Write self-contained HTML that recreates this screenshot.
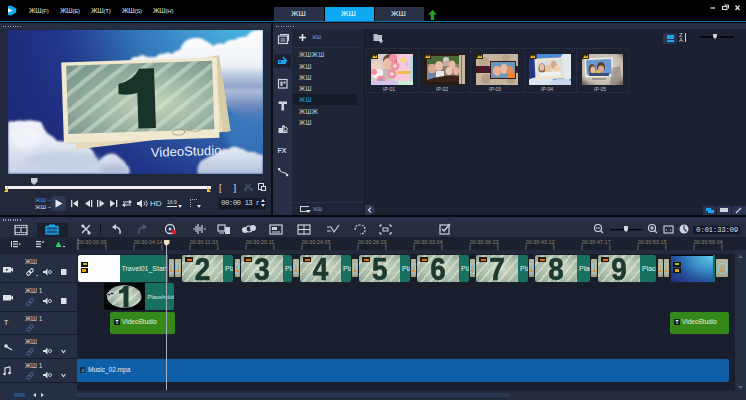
<!DOCTYPE html>
<html><head><meta charset="utf-8">
<style>
*{margin:0;padding:0;box-sizing:border-box}
html,body{width:746px;height:400px;overflow:hidden;background:#000;font-family:"Liberation Sans",sans-serif;}
.a{position:absolute}
.t{position:absolute;white-space:nowrap;line-height:1}
.dots{position:absolute;height:1.5px;background:repeating-linear-gradient(90deg,#9aa2b4 0 1px,transparent 1px 2.4px)}
.clipimg{background:repeating-linear-gradient(-50deg,rgba(230,238,222,0.5) 0 2px,transparent 2px 7px),radial-gradient(ellipse at 55% 50%,#d2dcc6 0%,#a9bca8 60%,#8aa294 100%);border-radius:2px 0 0 2px;overflow:hidden}
.num{font-family:"Liberation Sans",sans-serif;font-weight:bold;font-size:31px;color:#1c3a30;line-height:1;-webkit-text-stroke:0.7px #1c3a30;transform:scaleX(0.9)}
.fx{width:8px;height:5px;background:#2a1808;border:1.2px solid #2a1808;background-image:linear-gradient(#d8701a,#d8701a);background-size:5px 2px;background-position:1px 1px;background-repeat:no-repeat}
.tile{top:259px;height:17.7px;background:linear-gradient(#b8b898,#a4a484);border-radius:1px;overflow:hidden}
.tile::before{content:"";position:absolute;left:12%;right:12%;top:22%;bottom:18%;border:1px solid #8fd0e8;border-radius:40%}
.tile::after{content:"";position:absolute;left:50%;margin-left:-2px;width:4px;top:30%;height:45%;background:linear-gradient(transparent 0 40%,#e0902a 40% 55%,transparent 55% 80%,#e0902a 80%);clip-path:polygon(50% 0,100% 100%,0 100%);opacity:0.9}
</style></head><body>
<!-- MENU BAR -->
<div class="a" style="left:0;top:0;width:746px;height:21px;background:#000"></div>
<svg class="a" style="left:7px;top:5px" width="11" height="11" viewBox="0 0 11 11"><path d="M1 1 L4 0.5 L9.2 3.5 L9.2 7.5 L4 10.5 L1 10 Z" fill="#12aef0"/><path d="M1 3.3 L5.5 5.5 L1 7.7 Z" fill="#fff"/><path d="M3 1.5 L8 4" stroke="#0a88d0" stroke-width="0.8"/></svg>
<div class="t" style="left:29px;top:6.5px;font-size:7px;color:#dfe3ea;letter-spacing:-0.2px">ЖШ<span style="font-size:6px">(F)</span></div>
<div class="t" style="left:60px;top:6.5px;font-size:7px;color:#dfe3ea;letter-spacing:-0.2px">ЖШ<span style="font-size:6px">(E)</span></div>
<div class="t" style="left:91px;top:6.5px;font-size:7px;color:#dfe3ea;letter-spacing:-0.2px">ЖШ<span style="font-size:6px">(T)</span></div>
<div class="t" style="left:122px;top:6.5px;font-size:7px;color:#dfe3ea;letter-spacing:-0.2px">ЖШ<span style="font-size:6px">(S)</span></div>
<div class="t" style="left:153px;top:6.5px;font-size:7px;color:#dfe3ea;letter-spacing:-0.2px">ЖШ<span style="font-size:6px">(H)</span></div>
<!-- tabs -->
<div class="a" style="left:274px;top:7px;width:50px;height:14px;background:#293146"></div>
<div class="a" style="left:325px;top:7px;width:49px;height:14px;background:#0ea8f2"></div>
<div class="a" style="left:375px;top:7px;width:49px;height:14px;background:#293146"></div>
<div class="t" style="left:291px;top:10px;font-size:8px;color:#e8ebf0">ЖШ</div>
<div class="t" style="left:341px;top:10px;font-size:8px;color:#fff">ЖШ</div>
<div class="t" style="left:391px;top:10px;font-size:8px;color:#e8ebf0">ЖШ</div>
<svg class="a" style="left:427.5px;top:9.5px" width="9" height="10" viewBox="0 0 9 10"><path d="M4.5 0 L9 4.5 L6.2 4.5 L6.2 10 L2.8 10 L2.8 4.5 L0 4.5 Z" fill="#28a028"/></svg>
<!-- window controls -->
<svg class="a" style="left:708px;top:3px" width="36" height="10" viewBox="0 0 36 10" stroke="#d8dce4" fill="none">
<path d="M2.5 5 H7" stroke-width="1.3"/>
<rect x="14.5" y="3.5" width="4.5" height="3" stroke-width="1.1"/><path d="M16.5 2 H20.5 V5.5" stroke-width="1"/>
<path d="M27.5 2.5 L31.5 7 M31.5 2.5 L27.5 7" stroke-width="1.3"/>
</svg>
<!-- accent line -->
<div class="a" style="left:0;top:21px;width:746px;height:1.3px;background:#0f72a8"></div>
<div class="a" style="left:0;top:22px;width:746px;height:1px;background:#05080d"></div>

<!-- PREVIEW PANEL -->
<div class="a" style="left:0;top:23px;width:271px;height:192px;background:#212839"></div>
<div class="a" style="left:0;top:23px;width:271px;height:6px;background:#272e41"></div>
<div class="dots" style="left:2.5px;top:25.5px;width:19px"></div>
<svg id="preview" class="a" style="left:8px;top:30px" width="255" height="144" viewBox="0 0 255 144">
<defs>
<radialGradient id="sky" cx="238" cy="-30" r="290" gradientUnits="userSpaceOnUse">
<stop offset="0" stop-color="#5ecaee"/><stop offset="0.15" stop-color="#44a6d8"/><stop offset="0.3" stop-color="#3a88c6"/><stop offset="0.42" stop-color="#3070b2"/><stop offset="0.55" stop-color="#284c9a"/><stop offset="0.66" stop-color="#21368a"/><stop offset="0.8" stop-color="#1f2d7e"/><stop offset="1" stop-color="#1d2876"/>
</radialGradient>
<radialGradient id="sage" cx="0.6" cy="0.6" r="0.75">
<stop offset="0" stop-color="#c4d4ba"/><stop offset="0.55" stop-color="#98b2a2"/><stop offset="1" stop-color="#78968a"/>
</radialGradient>
<pattern id="str" width="13.5" height="13.5" patternUnits="userSpaceOnUse" patternTransform="rotate(53)">
<rect x="0" y="0" width="4.3" height="13.5" fill="#dce6d6" fill-opacity="0.5"/>
</pattern>
<linearGradient id="cl1" x1="0" y1="0" x2="0" y2="95" gradientUnits="userSpaceOnUse"><stop offset="0" stop-color="#ffffff"/><stop offset="0.38" stop-color="#eef2f8"/><stop offset="0.47" stop-color="#bdcae0"/><stop offset="0.6" stop-color="#91a4c9"/><stop offset="0.64" stop-color="#aebcda"/><stop offset="0.76" stop-color="#8096c3"/><stop offset="0.9" stop-color="#5a7cb8" stop-opacity="0.6"/><stop offset="1" stop-color="#4a70b0" stop-opacity="0"/></linearGradient>
<linearGradient id="cl2" x1="0" y1="90" x2="0" y2="144" gradientUnits="userSpaceOnUse"><stop offset="0" stop-color="#f2f5fa"/><stop offset="0.45" stop-color="#e2e8f2"/><stop offset="1" stop-color="#c6cfe4"/></linearGradient>
<linearGradient id="cl3" x1="0" y1="117" x2="0" y2="144" gradientUnits="userSpaceOnUse"><stop offset="0" stop-color="#e6ecf5"/><stop offset="0.5" stop-color="#cdd7e8"/><stop offset="1" stop-color="#b4c2dc"/></linearGradient>
<filter id="bl" x="-10%" y="-10%" width="120%" height="120%"><feGaussianBlur stdDeviation="0.8"/></filter>
<filter id="bl2" x="-30%" y="-30%" width="160%" height="160%"><feGaussianBlur stdDeviation="2.5"/></filter>
</defs>
<rect width="255" height="144" fill="url(#sky)"/>
<ellipse cx="245" cy="100" rx="28" ry="30" fill="#3a7cc0" opacity="0.7" filter="url(#bl2)"/>
<!-- top right cloud -->
<path filter="url(#bl)" fill="url(#cl1)" d="M122,31 Q124,26 130,27 Q134,23 139,27 L148,27 Q151,23 156,24 Q160,21 164,24 Q168,20 172,20 Q175,10 183,8.5 Q192,6 198,11 Q203,13 205,16 Q210,12 216,14 Q220,9 226,10 Q232,6 238,7 Q242,1 249,0 L255,0 L255,97 Q240,94 226,84 Q210,68 195,50 L122,33 Z"/>
<!-- bottom left cloud -->
<path filter="url(#bl)" fill="url(#cl2)" d="M0,92.5 Q2,90.5 6,91.5 Q11,90 16,91 Q22,89.5 27,91 Q31,91 33.5,92.5 Q35,97 37,100 Q39,103 40.5,104 Q45,106 49,111 L66,112 Q70,110 74,112 Q79,113 81,117.5 Q85,119 87.5,127 Q90,130 91,131 Q96,124 103,123.5 Q108,123 111,127 Q116,130 119,135.5 Q122,137 121.5,144 L0,144 Z"/>
<ellipse cx="55" cy="130" rx="38" ry="9" fill="#b9c4dc" opacity="0.5" filter="url(#bl2)"/>
<ellipse cx="18" cy="108" rx="16" ry="10" fill="#f6f8fc" opacity="0.7" filter="url(#bl2)"/>
<ellipse cx="106" cy="140" rx="14" ry="5" fill="#9aa8cc" opacity="0.5" filter="url(#bl2)"/>
<!-- bottom right cloud -->
<path filter="url(#bl)" fill="url(#cl3)" d="M190,144 Q188,137 193,131 Q203,125 210,123 Q214,118 220,119 Q226,115 231,118 Q236,119 240,122 Q246,121 250,124 L255,125 L255,144 Z"/>
<!-- back card -->
<polygon points="62,45 211,25.5 222.5,101 68,119.5" fill="#e5d9ba"/>
<polygon points="205,26.3 211,25.5 222.5,101 215,102" fill="#d9cba6"/>
<!-- front card -->
<g transform="translate(53.25 32.5) rotate(-1.9)">
<rect x="0" y="0" width="155.6" height="80.5" fill="#f1e8d0"/>
<rect x="4.8" y="3.3" width="146" height="68.5" fill="url(#sage)"/>
<rect x="4.8" y="3.3" width="146" height="68.5" fill="url(#str)"/>
<path d="M92.5 8.8 L92.5 68.5 L75 68.5 L75 33 Q66 35.5 56.2 33.4 L56.4 23.4 Q72 20 77.5 8.8 Z" fill="#193328"/>
<ellipse cx="115" cy="73.5" rx="6" ry="3" fill="none" stroke="#9a8e78" stroke-width="1" stroke-dasharray="1.2 0.6"/><path d="M121 73 Q125 71 129 73 Q133 74 138 72" fill="none" stroke="#a89c84" stroke-width="0.8"/>
</g>
<text x="143" y="127" transform="rotate(-2 143 127)" font-family="Liberation Sans" font-size="13" fill="#eef2f8" letter-spacing="0.35" textLength="71" lengthAdjust="spacing">VideoStudio</text>
</svg>


<!-- preview controls -->
<div class="a" style="left:30.5px;top:178px;width:7px;height:7px;background:#c9ccd4;clip-path:polygon(0 0,100% 0,100% 55%,50% 100%,0 55%)"></div>
<div class="a" style="left:5px;top:186px;width:206px;height:2.5px;background:#f2f2f2"></div>
<div class="a" style="left:4px;top:186px;width:4px;height:6px;background:#f0b84a;clip-path:polygon(100% 0,100% 100%,0 100%)"></div>
<div class="a" style="left:207px;top:186px;width:4px;height:6px;background:#f0b84a;clip-path:polygon(0 0,100% 100%,0 100%)"></div>
<div class="t" style="left:35px;top:197px;font-size:6px;color:#1ea7f0">ЖШ –</div>
<div class="t" style="left:35px;top:204px;font-size:6px;color:#d8dce4">ЖШ –</div>
<div class="a" style="left:51px;top:196px;width:15px;height:15px;background:#2e3850;border-radius:2px"></div>
<svg class="a" style="left:55px;top:199px" width="8" height="9" viewBox="0 0 8 9"><path d="M0.5 0.5 L7.5 4.5 L0.5 8.5Z" fill="#e8ebf0"/></svg>
<svg class="a" style="left:70px;top:196px" width="130" height="15" viewBox="0 0 130 15" fill="#d9dde5" stroke="#d9dde5">
<rect x="1" y="4" width="1.3" height="7" stroke="none"/><path d="M8 4 L3 7.5 L8 11Z" stroke="none"/>
<path d="M20 4 L15 7.5 L20 11Z" stroke="none"/><rect x="21" y="4" width="1.3" height="7" stroke="none"/>
<rect x="27" y="4" width="1.3" height="7" stroke="none"/><path d="M29.5 4 L34.5 7.5 L29.5 11Z" stroke="none"/>
<path d="M40 4 L45 7.5 L40 11Z" stroke="none"/><rect x="46" y="4" width="1.3" height="7" stroke="none"/>
<path d="M53 6 L61 6 M59 4.5 L61 6 L59 7.5 M61 9 L53 9 M55 7.5 L53 9 L55 10.5" fill="none" stroke-width="1.2"/>
<path d="M67 6 L69 6 L72 3.5 L72 11.5 L69 9 L67 9Z" stroke="none"/><path d="M74 5.5 Q75.5 7.5 74 9.5 M76 4.5 Q78.5 7.5 76 10.5" fill="none" stroke-width="0.9"/>
</svg>
<div class="t" style="left:150px;top:199.5px;font-size:8px;color:#d9dde5">HD</div>
<div class="a" style="left:167px;top:199px;width:10px;height:8px;border-bottom:1px solid #d9dde5"></div>
<div class="t" style="left:167px;top:200px;font-size:5px;color:#d9dde5">16:9</div>
<div class="a" style="left:178px;top:205px;width:4px;height:3px;background:#d9dde5;clip-path:polygon(0 0,100% 0,50% 100%)"></div>
<div class="a" style="left:190px;top:199px;width:7px;height:8px;border-left:1px dotted #aab;border-top:1px dotted #aab"></div>
<div class="a" style="left:197px;top:205px;width:4px;height:3px;background:#d9dde5;clip-path:polygon(0 0,100% 0,50% 100%)"></div>
<div class="t" style="left:219px;top:183px;font-size:9.5px;color:#d9dde5">[</div>
<div class="t" style="left:233.5px;top:183px;font-size:9.5px;color:#d9dde5">]</div>
<svg class="a" style="left:244px;top:183px" width="9" height="8" viewBox="0 0 9 8"><path d="M1 1 L7 6 M7 1 L1 6" stroke="#5d6a88" stroke-width="1"/><circle cx="1.5" cy="6.5" r="1.2" fill="none" stroke="#5d6a88" stroke-width="0.8"/><circle cx="7.5" cy="6.5" r="1.2" fill="none" stroke="#5d6a88" stroke-width="0.8"/></svg>
<div class="a" style="left:258px;top:183px;width:6px;height:7px;border:1.2px solid #d9dde5"></div>
<div class="a" style="left:261px;top:186px;width:5px;height:5px;border:1.2px solid #d9dde5;background:#212839"></div>
<div class="a" style="left:219px;top:198px;width:47px;height:11px;background:#141925"></div>
<div class="a" style="left:220px;top:199px;width:39px;height:9px;overflow:hidden"><div class="t" style="left:1px;top:1px;font-size:7.5px;color:#d0d4dc;font-family:'Liberation Mono',monospace;letter-spacing:-0.6px">00:00 13 n</div></div>
<div class="a" style="left:261px;top:199px;width:4px;height:3px;background:#d9dde5;clip-path:polygon(50% 0,100% 100%,0 100%)"></div>
<div class="a" style="left:261px;top:204px;width:4px;height:3px;background:#d9dde5;clip-path:polygon(0 0,100% 0,50% 100%)"></div>
<!-- LIBRARY PANEL -->
<div class="a" style="left:271px;top:23px;width:2px;height:192px;background:#0b0e15"></div>
<div class="a" style="left:273px;top:23px;width:473px;height:192px;background:#1b2130"></div>
<div class="a" style="left:273px;top:23px;width:473px;height:6px;background:#272e41"></div>
<div class="dots" style="left:275.5px;top:25.5px;width:19px"></div>
<div class="a" style="left:273px;top:29px;width:19px;height:186px;background:#262f45"></div>
<div class="a" style="left:292px;top:29px;width:72px;height:186px;background:#1e2536"></div>
<div class="a" style="left:364px;top:29px;width:1px;height:186px;background:#151a26"></div>


<!-- library sidebar icons -->
<svg class="a" style="left:273px;top:29px" width="19" height="186" viewBox="0 0 19 186" fill="#cfd4de">
<path d="M7 5.5 H15.5 V12" fill="none" stroke="#cfd4de" stroke-width="1.1"/><rect x="5.5" y="7" width="9" height="7.5" fill="none" stroke="#cfd4de" stroke-width="1.2"/><rect x="7.5" y="9.5" width="5" height="0.9"/><rect x="7.5" y="11.5" width="5" height="0.9"/>
<rect x="1" y="25" width="17" height="13.5" fill="#1a2030"/>
<path d="M5 31 H13 V35 H5Z" fill="#1aa6ee"/><path d="M10 28 L14 32.5" stroke="#1aa6ee" stroke-width="1.6"/><rect x="6" y="32" width="2" height="1.2" fill="#1a2030"/>
<rect x="5.5" y="50.5" width="8.5" height="8.5" fill="none" stroke="#cfd4de" stroke-width="1.2"/><rect x="7.5" y="52.5" width="2" height="4.5"/><rect x="10.5" y="52.5" width="2" height="2"/>
<path d="M5.5 72.5 H14 V75 H11 V81.5 H8.5 V75 H5.5Z"/>
<path d="M5.5 99 H9 V96.5 H12 V99 H14.5 V104 H5.5Z"/><circle cx="12.5" cy="100" r="2.6" fill="#262f45"/><circle cx="12.5" cy="100" r="1.8" fill="none" stroke="#cfd4de" stroke-width="1"/>
<text x="4.5" y="124" font-family="Liberation Sans" font-weight="bold" font-size="7">FX</text>
<path d="M6.5 141 Q8 143.5 10.5 143.5 Q13 143.5 14 146" fill="none" stroke="#cfd4de" stroke-width="1.2"/><rect x="5" y="139" width="2.2" height="2.2"/><rect x="13" y="145" width="2.2" height="2.2"/>
</svg>
<!-- categories -->
<svg class="a" style="left:298px;top:33px" width="9" height="9" viewBox="0 0 9 9"><path d="M4.5 1 V8 M1 4.5 H8" stroke="#e8ebf0" stroke-width="1.6"/></svg>
<div class="t" style="left:312px;top:35px;font-size:5px;color:#7b9ad8">ЖШ</div>
<div class="a" style="left:293px;top:94px;width:64px;height:11px;background:#141a26"></div>
<div class="t" style="left:299px;top:52px;font-size:6.5px;color:#cdd2da;letter-spacing:0.4px">ЖШЖШ</div>
<div class="t" style="left:299px;top:63.5px;font-size:6.5px;color:#cdd2da;letter-spacing:0.4px">ЖШ</div>
<div class="t" style="left:299px;top:74.5px;font-size:6.5px;color:#cdd2da;letter-spacing:0.4px">ЖШ</div>
<div class="t" style="left:299px;top:85.5px;font-size:6.5px;color:#cdd2da;letter-spacing:0.4px">ЖШ</div>
<div class="t" style="left:299px;top:97px;font-size:6.5px;color:#1ea4ec;letter-spacing:0.4px">ЖШ</div>
<div class="t" style="left:299px;top:108.5px;font-size:6.5px;color:#cdd2da;letter-spacing:0.4px">ЖШЖ</div>
<div class="t" style="left:299px;top:119.5px;font-size:6.5px;color:#cdd2da;letter-spacing:0.4px">ЖШ</div>
<div class="a" style="left:292px;top:202px;width:72px;height:1px;background:#283045"></div>
<div class="a" style="left:292px;top:47px;width:72px;height:1px;background:#262e42"></div>
<div class="a" style="left:300px;top:206px;width:9px;height:1.2px;background:#cfd4de"></div>
<div class="a" style="left:300px;top:206px;width:1.2px;height:6px;background:#cfd4de"></div>
<div class="a" style="left:300px;top:211px;width:9px;height:1.2px;background:#cfd4de"></div>
<div class="a" style="left:306px;top:210px;width:5px;height:3px;background:#cfd4de;clip-path:polygon(0 0,100% 0,50% 100%)"></div>
<div class="t" style="left:313px;top:207px;font-size:5px;color:#7b9ad8">ЖШ</div>
<div class="a" style="left:365px;top:205px;width:10px;height:10px;background:#2e3954;border-radius:0 5px 5px 0"></div>
<svg class="a" style="left:367px;top:207px" width="6" height="6" viewBox="0 0 6 6"><path d="M4 0.5 L1.5 3 L4 5.5" fill="none" stroke="#d8dde6" stroke-width="1.1"/></svg>
<!-- content toolbar -->
<svg class="a" style="left:373px;top:33px" width="11" height="10" viewBox="0 0 11 10"><path d="M0.5 1 L4 1 L5 2 L9 2 L9 8 L0.5 8Z" fill="#b8bec9"/><path d="M8 6 V10 M6 8 H10" stroke="#d8dde6" stroke-width="1.2"/></svg>
<div class="a" style="left:663px;top:33px;width:14px;height:11px;background:#2a3350;border-radius:2px"></div>
<div class="a" style="left:667px;top:35px;width:7px;height:3.5px;background:#1aa6ee"></div>
<div class="a" style="left:667px;top:39.5px;width:7px;height:2.5px;background:#1aa6ee"></div>
<div class="t" style="left:679px;top:33px;font-size:6px;color:#cfd4de;line-height:5px">Z<br>A</div>
<div class="a" style="left:685px;top:33px;width:1px;height:9px;background:#cfd4de"></div>
<div class="a" style="left:700px;top:36px;width:34px;height:2px;background:#05070c;border-radius:1px"></div>
<div class="a" style="left:713px;top:34px;width:4px;height:5px;background:#c8ccd6;clip-path:polygon(0 0,100% 0,100% 60%,50% 100%,0 60%)"></div>
<!-- grid -->
<div class="a" style="left:365px;top:48px;width:264px;height:45px;border:1px solid #232c40;border-right-width:1px"></div>
<div class="a" style="left:418px;top:48px;width:1px;height:45px;background:#232c40"></div>
<div class="a" style="left:470px;top:48px;width:1px;height:45px;background:#232c40"></div>
<div class="a" style="left:524px;top:48px;width:1px;height:45px;background:#232c40"></div>
<div class="a" style="left:576px;top:48px;width:1px;height:45px;background:#232c40"></div>
<div class="t" style="left:383px;top:87px;font-size:5px;color:#c4cad6">IP-01</div>
<div class="t" style="left:436px;top:87px;font-size:5px;color:#c4cad6">IP-02</div>
<div class="t" style="left:489px;top:87px;font-size:5px;color:#c4cad6">IP-03</div>
<div class="t" style="left:541px;top:87px;font-size:5px;color:#c4cad6">IP-04</div>
<div class="t" style="left:594px;top:87px;font-size:5px;color:#c4cad6">IP-05</div>

<!-- thumbnails -->
<svg class="a" style="left:371px;top:54px" width="42" height="31" viewBox="0 0 42 31">
<rect width="42" height="31" fill="#f8c8dc"/>
<rect x="0" y="0" width="24" height="27" fill="#d8ccc8"/>
<ellipse cx="19" cy="6" rx="7" ry="6" fill="#6a4a38"/><ellipse cx="17" cy="10" rx="5" ry="6" fill="#e8c0a8"/>
<ellipse cx="6" cy="12" rx="5" ry="5" fill="#f0d0c0"/><ellipse cx="7" cy="20" rx="6" ry="5" fill="#f4f4f6"/><rect x="12" y="15" width="8" height="10" fill="#c8b8b8"/>
<circle cx="22" cy="4" r="4" fill="#f4909e"/><circle cx="24" cy="12" r="4.5" fill="#f4909e"/><circle cx="21" cy="20" r="4.5" fill="#f4909e"/><circle cx="10" cy="26" r="4.5" fill="#f4909e"/><circle cx="3" cy="18" r="3" fill="#f4909e"/>
<circle cx="24" cy="12" r="1.8" fill="#e6e8ec"/><circle cx="21" cy="20" r="1.8" fill="#e6e8ec"/><circle cx="10" cy="26" r="1.8" fill="#8aa6c8"/>
<circle cx="32" cy="6" r="2.5" fill="#f4e060"/><circle cx="36" cy="10" r="1.8" fill="#c0c0e8"/>
<rect x="27" y="17" width="13" height="3" fill="#f0b838" opacity="0.9"/>
<rect x="0" y="27" width="27" height="4" fill="#d4c4ec"/><rect x="27" y="27" width="15" height="4" fill="#c8f0d4"/>
<rect x="39.5" y="2" width="2.5" height="25" fill="#a8dce4"/>
<rect x="0" y="0" width="7" height="5" fill="#2a2416"/><path d="M1 4 L3 1 L4 3 L6 1 L6 4Z" fill="#f5c020"/>
</svg>
<svg class="a" style="left:424px;top:54px" width="41" height="31" viewBox="0 0 41 31">
<rect width="41" height="31" fill="#2a1a12"/>
<rect x="3" y="2" width="33" height="24" fill="#4a6a3a"/>
<rect x="3" y="10" width="33" height="16" fill="#8a7a70"/>
<ellipse cx="8" cy="15" rx="4" ry="5" fill="#d8a890"/><rect x="4" y="19" width="8" height="7" fill="#6a88b0"/>
<ellipse cx="15" cy="12" rx="4" ry="5" fill="#e8c0a8"/><rect x="12" y="17" width="8" height="8" fill="#e6e8ec"/>
<ellipse cx="22" cy="8" rx="3.5" ry="4.5" fill="#c8a8a0"/><ellipse cx="22" cy="5" rx="3" ry="2" fill="#c8c8c8"/>
<ellipse cx="28" cy="11" rx="3.5" ry="4.5" fill="#e8b8a0"/><ellipse cx="25" cy="17" rx="3.5" ry="4" fill="#f0c8b8"/><ellipse cx="32" cy="17" rx="3" ry="4" fill="#e8b0a0"/>
<path d="M3 26 Q20 20 36 22 L36 28 L3 28Z" fill="#3a2418"/>
<rect x="35" y="1" width="6" height="29" fill="#c8b8a0"/><rect x="37" y="1" width="1" height="29" fill="#8a7060"/>
<rect x="0" y="0" width="7" height="5" fill="#2a2416"/><path d="M1 4 L3 1 L4 3 L6 1 L6 4Z" fill="#f5c020"/>
</svg>
<svg class="a" style="left:476px;top:54px" width="42" height="31" viewBox="0 0 42 31">
<rect width="42" height="31" fill="#c6b59e"/>
<circle cx="8" cy="8" r="5" fill="#b09a80" opacity="0.6"/><circle cx="30" cy="4" r="4" fill="#b09a80" opacity="0.6"/><circle cx="10" cy="25" r="5" fill="#a89078" opacity="0.6"/><circle cx="35" cy="26" r="4" fill="#a89078" opacity="0.6"/>
<rect x="0" y="12" width="42" height="7" fill="#4a1828"/>
<rect x="14" y="7" width="26" height="18" fill="#3a1a18"/>
<rect x="15" y="8" width="24" height="16" fill="#6a98b8"/>
<ellipse cx="21" cy="17" rx="4" ry="5" fill="#f0b090"/><ellipse cx="28" cy="15" rx="4" ry="5" fill="#e8c0a0"/><ellipse cx="34" cy="17" rx="3.5" ry="5" fill="#e09060"/><rect x="31" y="19" width="8" height="5" fill="#f08030"/>
<rect x="0" y="0" width="7" height="5" fill="#2a2416"/><path d="M1 4 L3 1 L4 3 L6 1 L6 4Z" fill="#f5c020"/>
</svg>
<svg class="a" style="left:529px;top:54px" width="42" height="31" viewBox="0 0 42 31">
<rect width="42" height="31" fill="#4a8ad0"/>
<rect x="0" y="0" width="8" height="31" fill="#23368a"/>
<ellipse cx="38" cy="12" rx="8" ry="14" fill="#dfe8f4"/><ellipse cx="12" cy="28" rx="14" ry="5" fill="#dce6f2"/><ellipse cx="32" cy="29" rx="12" ry="4" fill="#c8d6ec"/>
<g transform="rotate(-3 20 15)"><rect x="6" y="4" width="30" height="21" fill="#efe6cc"/><rect x="8" y="6" width="26" height="16" fill="#d8dee4"/>
<ellipse cx="13" cy="14" rx="3.5" ry="5" fill="#8a6040"/><ellipse cx="13" cy="13" rx="2.5" ry="3.5" fill="#e8c0a8"/><ellipse cx="19" cy="15" rx="3" ry="4" fill="#e8c8a0"/><ellipse cx="25" cy="11" rx="3" ry="4" fill="#d8a888"/><ellipse cx="28" cy="16" rx="3" ry="4" fill="#f0d0b0"/><rect x="10" y="18" width="22" height="4" fill="#f0f0f0"/></g>
<rect x="0" y="0" width="7" height="5" fill="#2a2416"/><path d="M1 4 L3 1 L4 3 L6 1 L6 4Z" fill="#f5c020"/>
</svg>
<svg class="a" style="left:582px;top:54px" width="41" height="31" viewBox="0 0 41 31">
<defs><radialGradient id="vig" cx="0.5" cy="0.45" r="0.7"><stop offset="0" stop-color="#e2dcd2"/><stop offset="0.75" stop-color="#c4bab0"/><stop offset="1" stop-color="#6a6058"/></radialGradient></defs>
<rect width="41" height="31" fill="url(#vig)"/>
<rect x="3" y="4" width="28" height="19" fill="#f2eee6" transform="rotate(-2 17 15)"/>
<rect x="4.5" y="5.5" width="25" height="15" fill="#6a9ad0" transform="rotate(-2 17 15)"/>
<ellipse cx="10" cy="15" rx="3.5" ry="5" fill="#6a4a30"/><ellipse cx="11" cy="16" rx="2.5" ry="3.5" fill="#e8c0a0"/><ellipse cx="19" cy="13" rx="4" ry="5" fill="#5a4030"/><ellipse cx="19" cy="15" rx="3" ry="3.5" fill="#d8a888"/><circle cx="16" cy="18" r="2" fill="#f0c030"/><rect x="7" y="19" width="20" height="3" fill="#3a5078"/>
<rect x="10" y="24" width="14" height="2" fill="#8a8078" opacity="0.7"/>
<path d="M30 14 L38 12 L40 30 L28 30Z" fill="#7a7068" opacity="0.5"/>
<rect x="0" y="0" width="7" height="5" fill="#2a2416"/><path d="M1 4 L3 1 L4 3 L6 1 L6 4Z" fill="#f5c020"/>
</svg>
<!-- bottom right buttons -->
<div class="a" style="left:703px;top:206px;width:13px;height:9px;background:#2a3350"></div>
<div class="a" style="left:706px;top:208px;width:5px;height:3px;background:#1aa6ee"></div>
<div class="a" style="left:708px;top:210px;width:6px;height:3px;background:#1aa6ee"></div>
<div class="a" style="left:717px;top:206px;width:14px;height:9px;background:#2a3350"></div>
<div class="a" style="left:720px;top:208px;width:8px;height:4px;background:#cfd4de"></div>
<div class="a" style="left:732px;top:206px;width:14px;height:9px;background:#2a3350"></div>
<svg class="a" style="left:735px;top:207px" width="7" height="7" viewBox="0 0 7 7"><path d="M1 6 L6 1" stroke="#cfd4de" stroke-width="1.3"/></svg>
<!-- TIMELINE PANEL -->
<div class="a" style="left:0;top:215px;width:746px;height:2px;background:#07090e"></div>
<div class="a" style="left:0;top:217px;width:746px;height:183px;background:#181e2b"></div>
<div class="a" style="left:0;top:217px;width:746px;height:5px;background:#283045"></div>
<div class="dots" style="left:2.5px;top:219px;width:19px"></div>
<div class="a" style="left:0;top:222px;width:746px;height:15px;background:#252d3f"></div>
<div class="a" style="left:0;top:237px;width:77px;height:17px;background:#1e2535"></div>
<div class="a" style="left:77px;top:237px;width:669px;height:13px;background:#1a202e"></div>
<div class="a" style="left:77px;top:250px;width:669px;height:4px;background:#222a3b"></div>
<!-- track headers -->
<div class="a" style="left:0;top:254px;width:77px;height:146px;background:#252e43"></div>
<!-- bottom strip -->
<div class="a" style="left:77px;top:390px;width:669px;height:10px;background:#222a3c"></div>
<div class="a" style="left:77px;top:393px;width:433px;height:4px;background:#2d3650"></div>

<!-- TIMELINE CONTENT -->
<div class="a" style="left:37px;top:223px;width:31px;height:14px;background:#1a2030"></div>
<svg class="a" style="left:0;top:222px" width="746" height="15" viewBox="0 0 746 15" fill="#cfd4de" stroke="#cfd4de">
<rect x="15" y="3.5" width="12" height="9" fill="none" stroke-width="1.2"/><path d="M15 5.5 H27 M15 10.5 H27" stroke-width="0.9"/><path d="M21 5.5 V10.5" stroke-width="1"/><path d="M16.5 3.5 V5.5 M18.5 3.5 V5.5 M20.5 3.5 V5.5 M22.5 3.5 V5.5 M24.5 3.5 V5.5 M16.5 10.5 V12.5 M18.5 10.5 V12.5 M20.5 10.5 V12.5 M22.5 10.5 V12.5 M24.5 10.5 V12.5" stroke="#252d3f" stroke-width="0.7"/>
<rect x="46" y="4.5" width="12" height="7.5" fill="#1a5a8a" stroke="#1aa6ee" stroke-width="1.3"/><rect x="49" y="2.5" width="6" height="2.5" fill="#1aa6ee" stroke="none"/><path d="M46 8 H58" stroke="#1aa6ee" stroke-width="1"/>
<path d="M82 3 L90 11 M90 3 L82 11" stroke-width="1.4"/><circle cx="83" cy="4" r="1.6" stroke="none"/><circle cx="89" cy="11" r="1.6" stroke="none"/>
<rect x="100" y="2" width="1" height="11" fill="#0f131c" stroke="none"/>
<path d="M112 5 L116 2 L116 8Z" stroke="none"/><path d="M115 5 Q121 5 120 12" fill="none" stroke-width="1.4"/>
<path d="M147 5 L143 2 L143 8Z" fill="#4f5a74" stroke="none"/><path d="M144 5 Q138 5 139 12" fill="none" stroke="#4f5a74" stroke-width="1.4"/>
<circle cx="170" cy="7" r="4.5" fill="none" stroke-width="1.3"/><circle cx="170" cy="7" r="1.5" stroke="none"/><circle cx="174" cy="10" r="2.2" fill="#e8202a" stroke="none"/>
<path d="M193 7 H195 M196 4 V10 M198 2 V12 M200 5 V9 M202 3 V11 M204 7 H206" stroke-width="1.2"/>
<rect x="218" y="3" width="7" height="6" fill="none" stroke-width="1.2"/><rect x="225" y="5" width="5" height="7" stroke="none"/><path d="M219 11 H224" stroke-width="1"/>
<circle cx="245" cy="8" r="3" stroke="none"/><circle cx="249" cy="7" r="3" fill="#252d3f" stroke-width="1.1"/><circle cx="253" cy="6" r="3" stroke="none"/>
<rect x="270" y="3" width="12" height="9" fill="none" stroke-width="1.2"/><rect x="272" y="5" width="5" height="3" stroke="none"/><path d="M272 10 H280" stroke-width="1"/>
<rect x="298" y="3" width="12" height="9" fill="none" stroke-width="1.2"/><path d="M298 7.5 H310 M304 3 V12" stroke-width="1"/>
<path d="M327 5 L331 5 L334 10 L339 3" fill="none" stroke-width="1.2"/><path d="M327 9 H331" stroke-width="1"/>
<path d="M355 8 Q355 3 360 3 Q365 3 365 8 Q365 12 360 12" fill="none" stroke-width="1.2" stroke-dasharray="2 1.2"/>
<path d="M380 3 H382 M380 3 V5 M391 3 H389 M391 3 V5 M380 12 H382 M380 12 V10 M391 12 H389 M391 12 V10" stroke-width="1.2"/><rect x="383" y="6" width="5" height="3" fill="none" stroke-width="1"/>
<rect x="440" y="3" width="9" height="9" fill="none" stroke-width="1.2"/><path d="M442 7 L444 9 L450 2" fill="none" stroke-width="1.4"/>
<circle cx="598" cy="6" r="3.5" fill="none" stroke-width="1.2"/><path d="M596 6 H600 M600.5 8.5 L603 11" stroke-width="1.2"/>
<rect x="610" y="7" width="33" height="1.3" fill="#05070c" stroke="none"/><path d="M624 4 H628 V8 L626 10 L624 8Z" stroke="none"/>
<circle cx="652" cy="6" r="3.5" fill="none" stroke-width="1.2"/><path d="M650 6 H654 M652 4 V8 M654.5 8.5 L657 11" stroke-width="1.2"/>
<rect x="664" y="4" width="9" height="7" fill="none" stroke-width="1.1"/><path d="M666 8 H667 M670 8 H671" stroke-width="1"/>
<circle cx="684" cy="7" r="4.5" stroke="none"/><path d="M684 3.5 V7 L686.5 9.5" stroke="#252d3f" stroke-width="1.1" fill="none"/>
</svg>
<div class="a" style="left:693px;top:226px;width:47px;height:8px;background:#141925"></div>
<div class="t" style="left:696px;top:226.5px;font-size:7.5px;color:#d9dde5;font-family:'Liberation Mono',monospace;letter-spacing:-0.3px">0:01:33:09</div>
<svg class="a" style="left:0;top:237px" width="77" height="17" viewBox="0 0 77 17" fill="#cfd4de">
<rect x="11" y="4" width="1" height="6"/><rect x="13" y="4" width="5" height="1.2"/><rect x="13" y="6.5" width="5" height="1.2"/><rect x="13" y="9" width="5" height="1.2"/><path d="M19 6 L21 7 L19 8Z"/>
<rect x="36" y="4" width="5" height="1.2"/><rect x="36" y="6.5" width="5" height="1.2"/><rect x="36" y="9" width="5" height="1.2"/><path d="M42 5 H44 M43 4 V6" stroke="#cfd4de" stroke-width="0.8"/>
<path d="M55.5 10 L58.5 4.5 L61.5 10Z" fill="#22d46a"/><rect x="63" y="9" width="2" height="1"/>
</svg>
<svg class="a" style="left:77px;top:237px" width="658" height="13" viewBox="0 0 658 13"><rect x="0.4" y="1" width="1" height="12" fill="#7a8294"/><rect x="28.4" y="7.5" width="1" height="5.5" fill="#5f6779"/><rect x="56.4" y="7.5" width="1" height="5.5" fill="#5f6779"/><rect x="84.4" y="7.5" width="1" height="5.5" fill="#5f6779"/><rect x="112.4" y="7.5" width="1" height="5.5" fill="#5f6779"/><rect x="140.4" y="7.5" width="1" height="5.5" fill="#5f6779"/><rect x="168.4" y="7.5" width="1" height="5.5" fill="#5f6779"/><rect x="196.4" y="7.5" width="1" height="5.5" fill="#5f6779"/><rect x="224.4" y="7.5" width="1" height="5.5" fill="#5f6779"/><rect x="252.4" y="7.5" width="1" height="5.5" fill="#5f6779"/><rect x="280.4" y="7.5" width="1" height="5.5" fill="#5f6779"/><rect x="308.4" y="7.5" width="1" height="5.5" fill="#5f6779"/><rect x="336.4" y="7.5" width="1" height="5.5" fill="#5f6779"/><rect x="364.4" y="7.5" width="1" height="5.5" fill="#5f6779"/><rect x="392.4" y="7.5" width="1" height="5.5" fill="#5f6779"/><rect x="420.4" y="7.5" width="1" height="5.5" fill="#5f6779"/><rect x="448.4" y="7.5" width="1" height="5.5" fill="#5f6779"/><rect x="476.4" y="7.5" width="1" height="5.5" fill="#5f6779"/><rect x="504.4" y="7.5" width="1" height="5.5" fill="#5f6779"/><rect x="532.4" y="7.5" width="1" height="5.5" fill="#5f6779"/><rect x="560.4" y="7.5" width="1" height="5.5" fill="#5f6779"/><rect x="588.4" y="7.5" width="1" height="5.5" fill="#5f6779"/><rect x="616.4" y="7.5" width="1" height="5.5" fill="#5f6779"/><rect x="644.4" y="7.5" width="1" height="5.5" fill="#5f6779"/></svg>
<div class="t" style="left:78.0px;top:239.5px;font-size:5px;color:#958f7c;letter-spacing:0.2px">00:00:00:00</div>
<div class="t" style="left:134.0px;top:239.5px;font-size:5px;color:#958f7c;letter-spacing:0.2px">00:00:04:14</div>
<div class="t" style="left:190.0px;top:239.5px;font-size:5px;color:#958f7c;letter-spacing:0.2px">00:00:11:03</div>
<div class="t" style="left:246.0px;top:239.5px;font-size:5px;color:#958f7c;letter-spacing:0.2px">00:00:20:11</div>
<div class="t" style="left:302.0px;top:239.5px;font-size:5px;color:#958f7c;letter-spacing:0.2px">00:00:24:05</div>
<div class="t" style="left:358.0px;top:239.5px;font-size:5px;color:#958f7c;letter-spacing:0.2px">00:00:28:20</div>
<div class="t" style="left:414.0px;top:239.5px;font-size:5px;color:#958f7c;letter-spacing:0.2px">00:00:33:04</div>
<div class="t" style="left:470.0px;top:239.5px;font-size:5px;color:#958f7c;letter-spacing:0.2px">00:00:38:23</div>
<div class="t" style="left:526.0px;top:239.5px;font-size:5px;color:#958f7c;letter-spacing:0.2px">00:00:43:12</div>
<div class="t" style="left:582.0px;top:239.5px;font-size:5px;color:#958f7c;letter-spacing:0.2px">00:00:47:17</div>
<div class="t" style="left:638.0px;top:239.5px;font-size:5px;color:#958f7c;letter-spacing:0.2px">00:00:53:15</div>
<div class="t" style="left:694.0px;top:239.5px;font-size:5px;color:#958f7c;letter-spacing:0.2px">00:00:59:04</div>
<div class="a" style="left:163.5px;top:240px;width:6px;height:6px;background:#e8e0c8;clip-path:polygon(0 0,100% 0,100% 60%,50% 100%,0 60%)"></div>
<div class="a" style="left:0;top:282px;width:77px;height:1px;background:#171c28"></div>
<div class="a" style="left:77px;top:282px;width:658px;height:1px;background:#1c2231"></div>
<div class="a" style="left:0;top:311px;width:77px;height:1px;background:#171c28"></div>
<div class="a" style="left:77px;top:311px;width:658px;height:1px;background:#1c2231"></div>
<div class="a" style="left:0;top:334px;width:77px;height:1px;background:#171c28"></div>
<div class="a" style="left:77px;top:334px;width:658px;height:1px;background:#1c2231"></div>
<div class="a" style="left:0;top:358px;width:77px;height:1px;background:#171c28"></div>
<div class="a" style="left:77px;top:358px;width:658px;height:1px;background:#1c2231"></div>
<div class="a" style="left:0;top:382px;width:77px;height:1px;background:#171c28"></div>
<div class="a" style="left:77px;top:382px;width:658px;height:1px;background:#1c2231"></div>
<div class="a" style="left:735px;top:250px;width:11px;height:140px;background:#252d40"></div>
<div class="a" style="left:738px;top:255px;width:5px;height:3px;background:#5a6478;clip-path:polygon(50% 0,100% 100%,0 100%)"></div>
<div class="a" style="left:738px;top:386px;width:5px;height:3px;background:#5a6478;clip-path:polygon(0 0,100% 0,50% 100%)"></div>
<div class="a" style="left:77.5px;top:254.5px;width:42px;height:27.5px;background:#fdfdfd;border-radius:2px 0 0 2px"></div>
<div class="a" style="left:119.5px;top:254.5px;width:48px;height:27.5px;background:#177060"></div>
<div class="a" style="left:80.5px;top:262px;width:7.5px;height:4.5px;background:#141408"><div class="a" style="left:2px;top:1px;width:4px;height:2px;background:#a8c020"></div></div>
<div class="a" style="left:80.5px;top:268px;width:7.5px;height:4.5px;background:#141408"><div class="a" style="left:1.5px;top:1px;width:4px;height:2.5px;background:#e0a020"></div></div>
<div class="t" style="left:121.5px;top:264.5px;font-size:7px;color:#e6f0ee">Travel01_Start</div>
<div class="a" style="left:223px;top:254.5px;width:10.0px;height:27.5px;background:#177060;border-radius:0 2px 2px 0;overflow:hidden"><div class="t" style="left:2px;top:10.5px;font-size:7px;color:#e6f0ee">Placeholder</div></div>
<div class="a clipimg" style="left:182px;top:254.5px;width:41.0px;height:27.5px"><div class="t num" style="left:0;width:100%;text-align:center;top:-0.7px">2</div><div class="a fx" style="left:3.3px;top:2.6px"></div></div>
<div class="a" style="left:283px;top:254.5px;width:9.3px;height:27.5px;background:#177060;border-radius:0 2px 2px 0;overflow:hidden"><div class="t" style="left:2px;top:10.5px;font-size:7px;color:#e6f0ee">Placeholder</div></div>
<div class="a clipimg" style="left:241px;top:254.5px;width:42.0px;height:27.5px"><div class="t num" style="left:0;width:100%;text-align:center;top:-0.7px">3</div><div class="a fx" style="left:3.3px;top:2.6px"></div></div>
<div class="a" style="left:341px;top:254.5px;width:10.0px;height:27.5px;background:#177060;border-radius:0 2px 2px 0;overflow:hidden"><div class="t" style="left:2px;top:10.5px;font-size:7px;color:#e6f0ee">Placeholder</div></div>
<div class="a clipimg" style="left:300px;top:254.5px;width:41.0px;height:27.5px"><div class="t num" style="left:0;width:100%;text-align:center;top:-0.7px">4</div><div class="a fx" style="left:3.3px;top:2.6px"></div></div>
<div class="a" style="left:400px;top:254.5px;width:10.0px;height:27.5px;background:#177060;border-radius:0 2px 2px 0;overflow:hidden"><div class="t" style="left:2px;top:10.5px;font-size:7px;color:#e6f0ee">Placeholder</div></div>
<div class="a clipimg" style="left:358.5px;top:254.5px;width:41.5px;height:27.5px"><div class="t num" style="left:0;width:100%;text-align:center;top:-0.7px">5</div><div class="a fx" style="left:3.3px;top:2.6px"></div></div>
<div class="a" style="left:459px;top:254.5px;width:9.6px;height:27.5px;background:#177060;border-radius:0 2px 2px 0;overflow:hidden"><div class="t" style="left:2px;top:10.5px;font-size:7px;color:#e6f0ee">Placeholder</div></div>
<div class="a clipimg" style="left:417px;top:254.5px;width:42.0px;height:27.5px"><div class="t num" style="left:0;width:100%;text-align:center;top:-0.7px">6</div><div class="a fx" style="left:3.3px;top:2.6px"></div></div>
<div class="a" style="left:518px;top:254.5px;width:10.0px;height:27.5px;background:#177060;border-radius:0 2px 2px 0;overflow:hidden"><div class="t" style="left:2px;top:10.5px;font-size:7px;color:#e6f0ee">Placeholder</div></div>
<div class="a clipimg" style="left:476px;top:254.5px;width:42.0px;height:27.5px"><div class="t num" style="left:0;width:100%;text-align:center;top:-0.7px">7</div><div class="a fx" style="left:3.3px;top:2.6px"></div></div>
<div class="a" style="left:577px;top:254.5px;width:13.0px;height:27.5px;background:#177060;border-radius:0 2px 2px 0;overflow:hidden"><div class="t" style="left:2px;top:10.5px;font-size:7px;color:#e6f0ee">Placeholder</div></div>
<div class="a clipimg" style="left:535px;top:254.5px;width:42.0px;height:27.5px"><div class="t num" style="left:0;width:100%;text-align:center;top:-0.7px">8</div><div class="a fx" style="left:3.3px;top:2.6px"></div></div>
<div class="a" style="left:640px;top:254.5px;width:15.8px;height:27.5px;background:#177060;border-radius:0 2px 2px 0;overflow:hidden"><div class="t" style="left:2px;top:10.5px;font-size:7px;color:#e6f0ee">Placeholder</div></div>
<div class="a clipimg" style="left:598px;top:254.5px;width:42.0px;height:27.5px"><div class="t num" style="left:0;width:100%;text-align:center;top:-0.7px">9</div><div class="a fx" style="left:3.3px;top:2.6px"></div></div>
<div class="a tile" style="left:168.8px;width:5.2px"></div>
<div class="a tile" style="left:175px;width:5.6px"></div>
<div class="a tile" style="left:234.7px;width:5.0px"></div>
<div class="a tile" style="left:293px;width:6.0px"></div>
<div class="a tile" style="left:352.2px;width:5.8px"></div>
<div class="a tile" style="left:411px;width:5.3px"></div>
<div class="a tile" style="left:469.5px;width:5.7px"></div>
<div class="a tile" style="left:528.7px;width:5.3px"></div>
<div class="a tile" style="left:591px;width:6.0px"></div>
<div class="a tile" style="left:657.9px;width:5.1px"></div>
<div class="a tile" style="left:663.5px;width:5.5px"></div>
<div class="a" style="left:671px;top:255.5px;width:41.5px;height:26.5px;background:radial-gradient(ellipse 60px 40px at 100% 0%,#66ccec 0%,#3a90c8 35%,#27509a 65%,#1c2670 100%)"></div>
<div class="a" style="left:671px;top:254.5px;width:41.5px;height:1px;background:#05070a"></div><div class="a" style="left:712.5px;top:254.5px;width:2.8px;height:27.5px;background:#177060"></div>
<div class="a" style="left:673px;top:262px;width:8px;height:4.5px;background:#141408"><div class="a" style="left:2px;top:1px;width:4px;height:2px;background:#a8c020"></div></div>
<div class="a" style="left:673px;top:268px;width:8px;height:4.5px;background:#141408"><div class="a" style="left:1.5px;top:1px;width:4px;height:2.5px;background:#e0a020"></div></div>
<div class="a tile" style="left:716.4px;width:12px"></div>
<div class="a" style="left:104px;top:283.2px;width:41px;height:26.5px;background:#050608;border-radius:2px 0 0 2px"></div>
<svg class="a" style="left:104px;top:283.2px" width="41" height="27" viewBox="0 0 41 27"><defs><radialGradient id="og" cx="0.55" cy="0.5" r="0.6"><stop offset="0" stop-color="#d6e0c8"/><stop offset="1" stop-color="#8aa298"/></radialGradient>
<pattern id="ostr" width="7" height="7" patternUnits="userSpaceOnUse" patternTransform="rotate(50)"><rect width="2" height="7" fill="#eef2e6" fill-opacity="0.5"/></pattern></defs>
<ellipse cx="20.2" cy="13.5" rx="17.2" ry="11.3" fill="url(#og)"/><ellipse cx="20.2" cy="13.5" rx="17.2" ry="11.3" fill="url(#ostr)"/>
<path d="M24.5 3 L24.5 24 L19.5 24 L19.5 9.5 Q17.5 10.5 15 10.5 L15 7.5 Q18.5 6.5 20 3Z" fill="#1c3a30"/>
<g stroke="#e8ecf2" stroke-width="0.9" fill="#1a2040"><ellipse cx="5" cy="11.5" rx="2" ry="1.5"/><ellipse cx="8" cy="10.5" rx="2" ry="1.5"/></g></svg>
<div class="a" style="left:144.7px;top:283.2px;width:29.5px;height:26.5px;background:#177060;border-radius:0 2px 2px 0;overflow:hidden"><div class="t" style="left:2.5px;top:10.5px;font-size:6px;color:#dce8e6">Placeholder</div></div>
<div class="a" style="left:110px;top:312px;width:65px;height:21.5px;background:#35891a;border-radius:2px"></div>
<div class="a" style="left:114px;top:319px;width:6px;height:6px;background:#12240c;color:#fff;font-size:5px;font-weight:bold;text-align:center;line-height:6px">T</div>
<div class="t" style="left:122px;top:319px;font-size:6.5px;color:#e8f2e0">VideoStudio</div>
<div class="a" style="left:670px;top:312px;width:58.75px;height:21.5px;background:#35891a;border-radius:2px"></div>
<div class="a" style="left:674px;top:319px;width:6px;height:6px;background:#12240c;color:#fff;font-size:5px;font-weight:bold;text-align:center;line-height:6px">T</div>
<div class="t" style="left:682px;top:319px;font-size:6.5px;color:#e8f2e0">VideoStudio</div>
<div class="a" style="left:77px;top:359.25px;width:652px;height:22.5px;background:#0f5ea8;border-radius:0 2px 2px 0"></div>
<div class="a" style="left:80px;top:367px;width:5px;height:6px;background:#0a2a50;color:#fff;font-size:5px;line-height:6px;text-align:center">♫</div>
<div class="t" style="left:88px;top:367px;font-size:6.5px;color:#e8eef6">Music_02.mpa</div>
<div class="a" style="left:166px;top:246px;width:1px;height:144px;background:#a8aebb"></div>
<svg class="a" style="left:0;top:254px" width="77" height="136" viewBox="0 0 77 136" fill="#dfe3ea" stroke="#dfe3ea"><defs><pattern id="chk" width="2" height="2" patternUnits="userSpaceOnUse"><rect width="2" height="2" fill="#5a6274"/><rect width="1" height="1" fill="#dfe3ea"/><rect x="1" y="1" width="1" height="1" fill="#dfe3ea"/></pattern></defs>
<rect x="3" y="13" width="8" height="5.5" stroke="none"/><path d="M11 15 L13 13.5 L13 18 L11 16.5Z" stroke="none"/><path d="M6 14.5 L8.5 15.75 L6 17Z" fill="#252e43" stroke="none"/>
<g transform="rotate(-45 30 18)" fill="none" stroke-width="1"><rect x="26" y="16.5" width="4.5" height="3" rx="1.5"/><rect x="29.5" y="16.5" width="4.5" height="3" rx="1.5"/></g><path d="M36 21 L38 21 L37 22.5Z" stroke="none"/>
<path d="M43 17 H45 L47.5 14.5 V21.5 L45 19 H43Z" stroke="none"/><circle cx="50" cy="18" r="1.5" fill="none" stroke-width="0.8"/>
<rect x="61" y="15" width="5.5" height="6" fill="url(#chk)" stroke="none"/>
<rect x="3" y="41" width="8" height="5.5" stroke="none"/><path d="M11 43 L13 41.5 L13 46 L11 44.5Z" stroke="none"/>
<g transform="rotate(-45 30 48.0)" fill="none" stroke="#4a5f88" stroke-width="1"><rect x="26" y="46.5" width="4.5" height="3" rx="1.5"/><rect x="29.5" y="46.5" width="4.5" height="3" rx="1.5"/></g>
<path d="M43 46 H45 L47.5 43.5 V50.5 L45 48 H43Z" stroke="none"/><circle cx="50" cy="47" r="1.5" fill="none" stroke-width="0.8"/>
<rect x="61" y="44" width="5.5" height="6" fill="url(#chk)" stroke="none"/>
<text x="4" y="71" font-family="Liberation Sans" font-size="7" stroke="none">T</text>
<g transform="rotate(-45 30 74.0)" fill="none" stroke="#4a5f88" stroke-width="1"><rect x="26" y="72.5" width="4.5" height="3" rx="1.5"/><rect x="29.5" y="72.5" width="4.5" height="3" rx="1.5"/></g>
<circle cx="6" cy="92" r="1.8" stroke="none"/><path d="M7 93 L12 96" stroke-width="1.2"/>
<g transform="rotate(-45 30 98.0)" fill="none" stroke="#4a5f88" stroke-width="1"><rect x="26" y="96.5" width="4.5" height="3" rx="1.5"/><rect x="29.5" y="96.5" width="4.5" height="3" rx="1.5"/></g>
<path d="M43 96 H45 L47.5 93.5 V100.5 L45 98 H43Z" stroke="none"/><circle cx="50" cy="97" r="1.5" fill="none" stroke-width="0.8"/>
<path d="M61.5 96 L63.5 98.5 L65.5 96" fill="none" stroke-width="1.1"/>
<path d="M5 120 V114 L10 113 V119" fill="none" stroke-width="1.1"/><circle cx="4.5" cy="120" r="1.3" stroke="none"/><circle cx="9.5" cy="119" r="1.3" stroke="none"/>
<g transform="rotate(-45 30 122.0)" fill="none" stroke="#4a5f88" stroke-width="1"><rect x="26" y="120.5" width="4.5" height="3" rx="1.5"/><rect x="29.5" y="120.5" width="4.5" height="3" rx="1.5"/></g>
<path d="M43 120 H45 L47.5 117.5 V124.5 L45 122 H43Z" stroke="none"/><circle cx="50" cy="121" r="1.5" fill="none" stroke-width="0.8"/>
<path d="M61.5 120 L63.5 122.5 L65.5 120" fill="none" stroke-width="1.1"/>
</svg>
<div class="t" style="left:25px;top:259px;font-size:6.5px;color:#cfd4de">ЖШ</div>
<div class="t" style="left:25px;top:288px;font-size:6.5px;color:#cfd4de">ЖШ 1</div>
<div class="t" style="left:25px;top:316px;font-size:6.5px;color:#cfd4de">ЖШ 1</div>
<div class="t" style="left:25px;top:339px;font-size:6.5px;color:#cfd4de">ЖШ</div>
<div class="t" style="left:25px;top:363px;font-size:6.5px;color:#cfd4de">ЖШ 1</div>
<div class="a" style="left:0;top:390px;width:77px;height:10px;background:#252e43"></div>
<div class="a" style="left:14px;top:393px;width:11px;height:4px;background:#2a4a78"></div>
<div class="a" style="left:33px;top:393px;width:3px;height:4px;background:#cfd4de;clip-path:polygon(100% 0,100% 100%,0 50%)"></div>
<div class="a" style="left:41px;top:393px;width:3px;height:4px;background:#cfd4de;clip-path:polygon(0 0,100% 50%,0 100%)"></div>
</body></html>
